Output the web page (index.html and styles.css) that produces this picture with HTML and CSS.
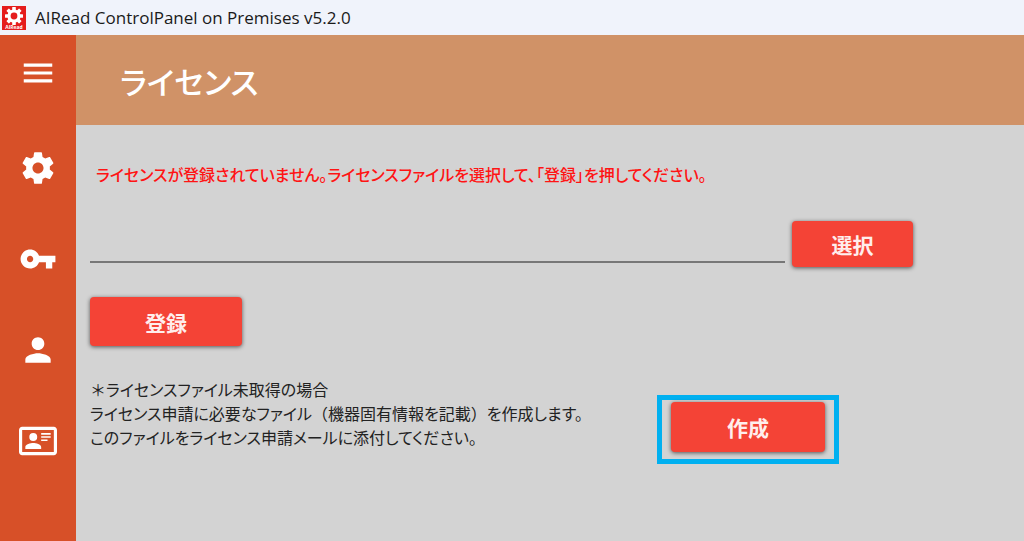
FILE: index.html
```html
<!DOCTYPE html>
<html lang="ja">
<head>
  <meta charset="UTF-8" />
  <meta name="viewport" content="width=device-width, initial-scale=1.0"/>
  <title>AIRead ControlPanel on Premises v5.2.0</title>
  <link rel="stylesheet" href="styles.css">
</head>
<body>
  <div class="titlebar">
    <svg class="logo" viewBox="0 0 24 24" aria-hidden="true">
      <rect width="24" height="24" fill="#e51c1c"/>
      <g transform="translate(12 10)" fill="#fff">
        <circle r="6.6"/>
        <rect x="-1.8" y="-9" width="3.6" height="18" rx="0.5"/>
        <rect x="-1.8" y="-9" width="3.6" height="18" rx="0.5" transform="rotate(45)"/>
        <rect x="-1.8" y="-9" width="3.6" height="18" rx="0.5" transform="rotate(90)"/>
        <rect x="-1.8" y="-9" width="3.6" height="18" rx="0.5" transform="rotate(135)"/>
        <circle r="3.4" fill="#e51c1c"/>
      </g>
      <text class="logo-text" x="12" y="23" text-anchor="middle">AIRead</text>
    </svg>
    <span>AIRead ControlPanel on Premises v5.2.0</span>
  </div>

  <div class="app">
    <nav class="sidebar">
      <button class="nav-item menu" type="button" aria-label="メニュー">
        <svg viewBox="0 0 24 24"><path d="M3 18h18v-2H3v2zm0-5h18v-2H3v2zm0-7v2h18V6H3z"/></svg>
      </button>
      <button class="nav-item" type="button" aria-label="設定">
        <svg viewBox="0 0 24 24"><path d="M19.43 12.98c.04-.32.07-.64.07-.98s-.03-.66-.07-.98l2.11-1.65c.19-.15.24-.42.12-.64l-2-3.46c-.12-.22-.39-.3-.61-.22l-2.49 1c-.52-.4-1.08-.73-1.69-.98l-.38-2.65C14.46 2.18 14.25 2 14 2h-4c-.25 0-.46.18-.49.42l-.38 2.65c-.61.25-1.17.59-1.69.98l-2.49-1c-.23-.09-.49 0-.61.22l-2 3.46c-.13.22-.07.49.12.64l2.11 1.65c-.04.32-.07.65-.07.98s.03.66.07.98l-2.11 1.65c-.19.15-.24.42-.12.64l2 3.46c.12.22.39.3.61.22l2.49-1c.52.4 1.08.73 1.69.98l.38 2.65c.03.24.24.42.49.42h4c.25 0 .46-.18.49-.42l.38-2.65c.61-.25 1.17-.59 1.69-.98l2.49 1c.23.09.49 0 .61-.22l2-3.46c.12-.22.07-.49-.12-.64l-2.11-1.65zM12 15.5c-1.93 0-3.5-1.57-3.5-3.5s1.57-3.5 3.5-3.5 3.5 1.57 3.5 3.5-1.57 3.5-3.5 3.5z"/></svg>
      </button>
      <button class="nav-item" type="button" aria-label="ライセンス">
        <svg viewBox="0 0 24 24"><path d="M12.65 10C11.83 7.67 9.61 6 7 6c-3.31 0-6 2.69-6 6s2.69 6 6 6c2.61 0 4.83-1.67 5.65-4H17v4h4v-4h2v-4H12.65zM7 14c-1.1 0-2-.9-2-2s.9-2 2-2 2 .9 2 2-.9 2-2 2z"/></svg>
      </button>
      <button class="nav-item" type="button" aria-label="ユーザー">
        <svg viewBox="0 0 24 24"><path d="M12 12c2.21 0 4-1.79 4-4s-1.79-4-4-4-4 1.79-4 4 1.79 4 4 4zm0 2c-2.67 0-8 1.34-8 4v2h16v-2c0-2.66-5.33-4-8-4z"/></svg>
      </button>
      <button class="nav-item" type="button" aria-label="アカウント情報">
        <svg viewBox="0 0 24 24"><path d="M22,3H2C0.91,3.04 0.04,3.91 0,5V19C0.04,20.09 0.91,20.96 2,21H22C23.09,20.96 23.96,20.09 24,19V5C23.96,3.91 23.09,3.04 22,3M22,19H2V5H22V19M14,17V15.75C14,14.09 10.66,13.25 9,13.25C7.34,13.25 4,14.09 4,15.75V17H14M9,7A2.5,2.5 0 0,0 6.5,9.5A2.5,2.5 0 0,0 9,12A2.5,2.5 0 0,0 11.5,9.5A2.5,2.5 0 0,0 9,7M14,7V8H20V7H14M14,9V10H20V9H14M14,11V12H18V11H14"/></svg>
      </button>
    </nav>

    <div class="main">
      <header class="header">
        <h1>ライセンス</h1>
      </header>

      <main class="content">
        <p class="message">ライセンスが登録されていません。ライセンスファイルを選択して、「登録」を押してください。</p>

        <div class="file-row">
          <input type="text" class="file-input" aria-label="ライセンスファイル" />
          <button class="btn btn-select" type="button">選択</button>
        </div>

        <button class="btn btn-register" type="button">登録</button>

        <div class="request-row">
          <p class="note"><span class="full">＊</span>ライセンスファイル未取得の場合<br>ライセンス申請に必要なファイル<span class="full">（</span>機器固有情報を記載<span class="full">）</span>を作成します。<br>このファイルをライセンス申請メールに添付してください。</p>
          <div class="highlight">
            <button class="btn btn-create" type="button">作成</button>
          </div>
        </div>
      </main>
    </div>
  </div>
</body>
</html>
```
FILE: styles.css
```css
* {
  box-sizing: border-box;
}

body {
  margin: 0;
  min-height: 100vh;
  display: flex;
  flex-direction: column;
  font-family: "Noto Sans CJK JP", sans-serif;
  font-feature-settings: "palt";
  background: #d3d3d3;
  color: #222;
}

.titlebar {
  display: flex;
  align-items: center;
  gap: 9px;
  height: 35px;
  padding: 0 2px;
  background: #f0f3fb;
  color: #1a1a1a;
  font-family: "Open Sans", "Noto Sans", sans-serif;
  font-size: 17px;
}

.logo {
  width: 24px;
  height: 24px;
}

.logo-text {
  font-size: 5px;
  font-weight: bold;
  fill: #fff;
}

.app {
  flex: 1;
  display: flex;
}

.sidebar {
  width: 76px;
  padding-top: 19px;
  display: flex;
  flex-direction: column;
  align-items: center;
  gap: 53px;
  background: #d75028;
}

.nav-item {
  width: 38px;
  height: 38px;
  padding: 0;
  border: none;
  background: none;
  cursor: pointer;
}

.nav-item svg {
  display: block;
  fill: #fff;
}

.menu {
  margin-bottom: 4px;
}

.main {
  flex: 1;
}

.header {
  display: flex;
  align-items: center;
  height: 90px;
  padding: 0 44px;
  background: #d09267;
}

h1 {
  margin: 0;
  color: #fff;
  font-size: 31px;
  font-weight: 500;
}

.content {
  padding: 36px 14px;
}

.message {
  margin: 0;
  padding-left: 6px;
  color: #ff1414;
  font-size: 16px;
  font-weight: 500;
  line-height: 26px;
}

.file-row {
  display: flex;
  align-items: flex-end;
  gap: 7px;
  margin-top: 34px;
}

.file-input {
  flex: 0 1 695px;
  min-width: 0;
  height: 42px;
  margin-bottom: 4px;
  padding: 0 4px;
  border: none;
  border-bottom: 2px solid #777;
  background: transparent;
  font: inherit;
  outline: none;
}

.btn {
  border: none;
  border-radius: 4px;
  background: #f44336;
  color: #ffeeed;
  font-family: inherit;
  font-size: 21px;
  font-weight: bold;
  box-shadow: 0 1px 4px rgba(0, 0, 0, 0.6);
  cursor: pointer;
}

.btn-select {
  width: 121px;
  height: 46px;
}

.btn-register {
  width: 152px;
  height: 49px;
  margin-top: 30px;
}

.request-row {
  display: flex;
  align-items: flex-start;
  gap: 50px;
  margin-top: 31px;
}

.note {
  flex: 0 1 517px;
  margin: 0;
  font-size: 16px;
  line-height: 24px;
}

.full {
  font-feature-settings: normal;
}

.highlight {
  margin-top: 18px;
  padding: 2px 9px 7px;
  border: 5px solid #00b0f0;
}

.btn-create {
  display: block;
  width: 154px;
  height: 50px;
}
```
